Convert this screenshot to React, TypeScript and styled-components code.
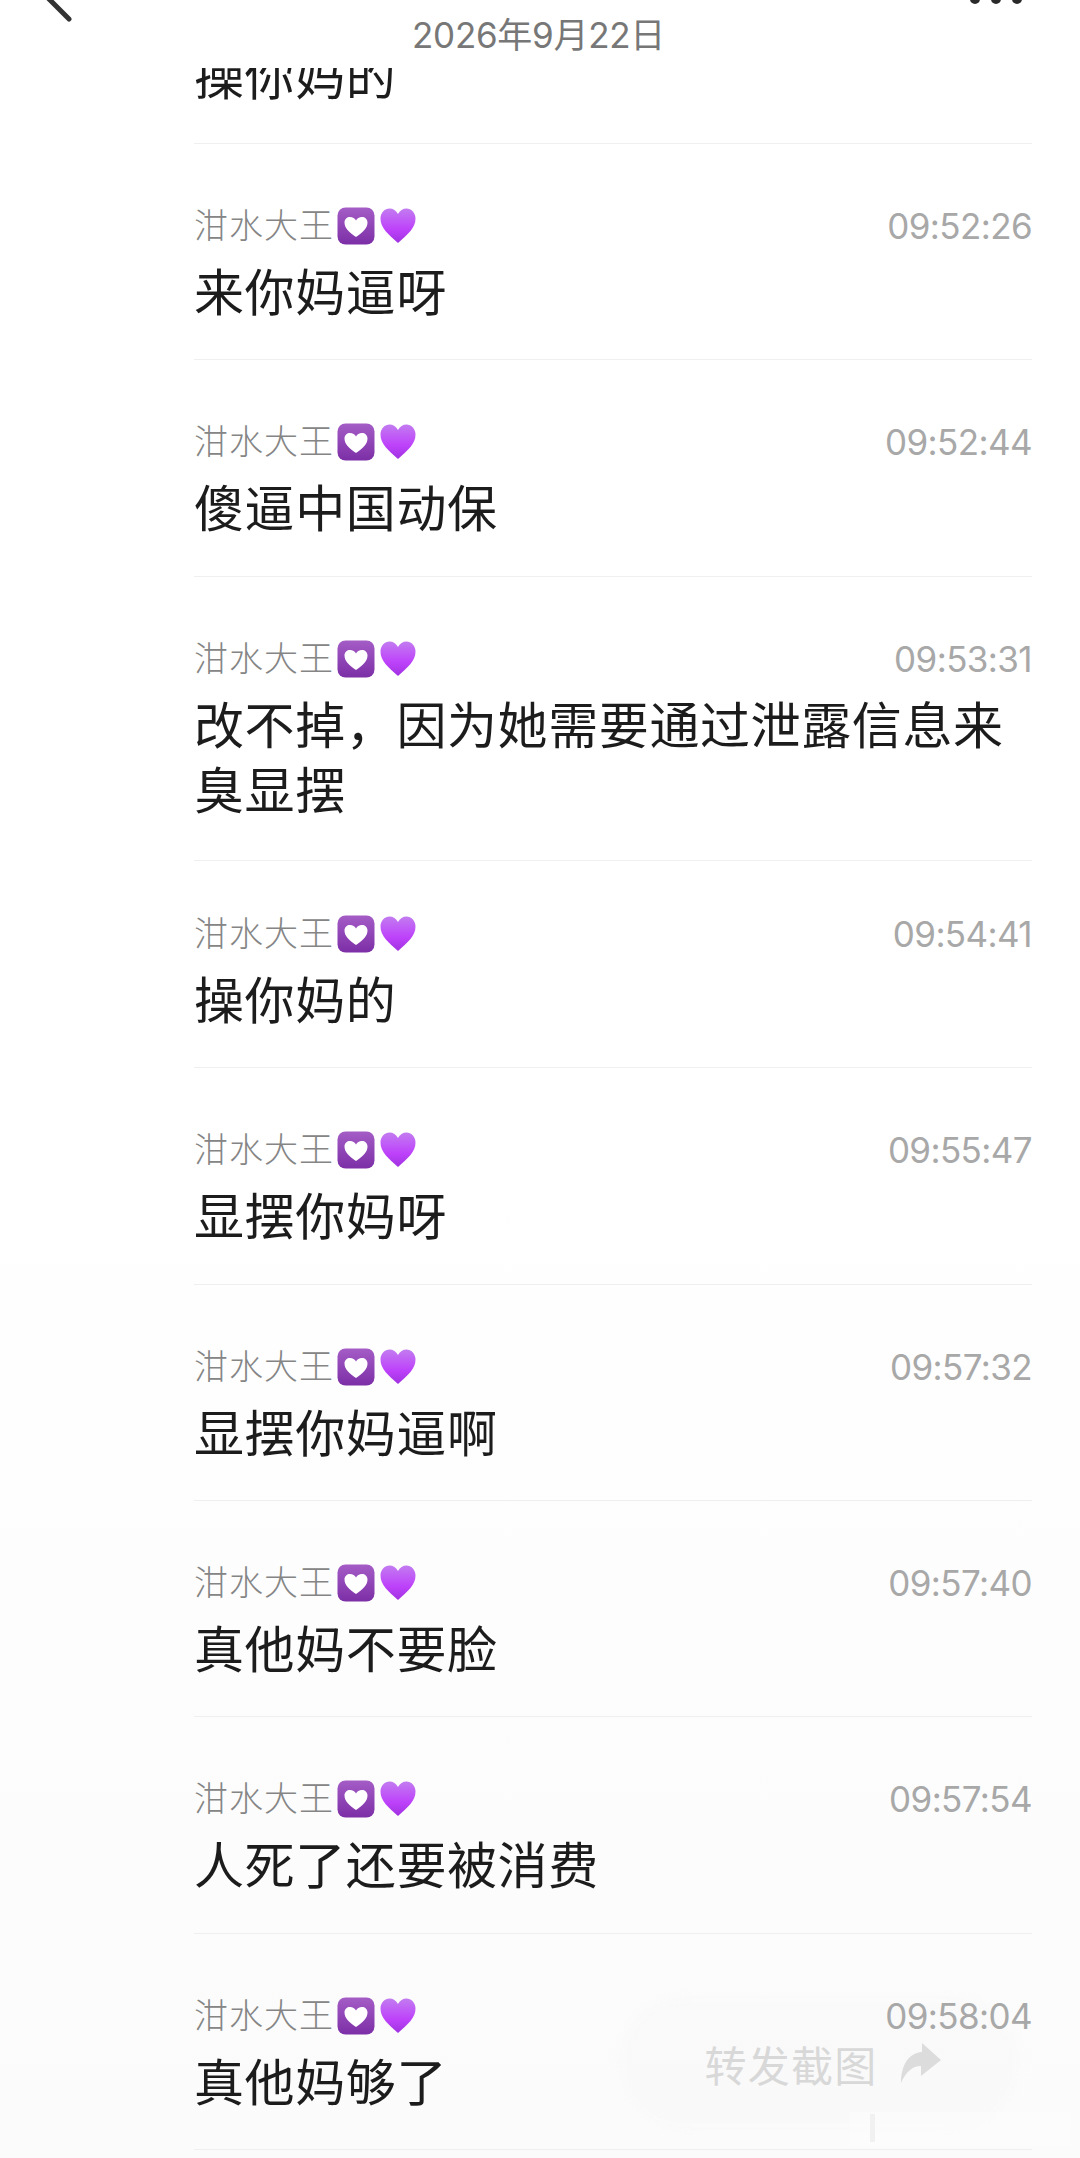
import React from 'react';
import styled, { createGlobalStyle } from 'styled-components';

type Message = {
  id: number;
  time: string;
  text: string;
  compact?: boolean;
  wrapped?: boolean;
};

const messages: Message[] = [
  { id: 1, time: '09:52:26', text: '来你妈逼呀' },
  { id: 2, time: '09:52:44', text: '傻逼中国动保' },
  { id: 3, time: '09:53:31', text: '改不掉，因为她需要通过泄露信息来臭显摆', wrapped: true },
  { id: 4, time: '09:54:41', text: '操你妈的', compact: true },
  { id: 5, time: '09:55:47', text: '显摆你妈呀' },
  { id: 6, time: '09:57:32', text: '显摆你妈逼啊' },
  { id: 7, time: '09:57:40', text: '真他妈不要脸' },
  { id: 8, time: '09:57:54', text: '人死了还要被消费' },
  { id: 9, time: '09:58:04', text: '真他妈够了' },
];

const GlobalStyle = createGlobalStyle`
  html, body {
    margin: 0;
    padding: 0;
    background: #fff;
  }
  * {
    box-sizing: border-box;
  }
`;

const Page = styled.div`
  position: relative;
  width: 1080px;
  height: 2158px;
  overflow: hidden;
  background: linear-gradient(#ffffff 0, #ffffff 1100px, #fbfbfb 2158px);
  font-family: "Liberation Sans", "Noto Sans CJK SC", sans-serif;
`;

const Header = styled.header`
  height: 68px;
  display: flex;
  align-items: center;
  justify-content: center;
  padding: 0 3px 3px 0;
  background: #fff;
`;

const DateLabel = styled.div`
  font-family: Inter, "Noto Sans CJK SC", sans-serif;
  font-size: 35px;
  letter-spacing: -0.3px;
  color: #777;
`;

const BackIcon = styled.svg`
  position: absolute;
  left: 40px;
  top: 0;
`;

const MoreDots = styled.div`
  position: absolute;
  right: 58px;
  top: -6px;
  display: flex;
  gap: 11px;
`;

const Dot = styled.span`
  width: 10px;
  height: 10px;
  border-radius: 50%;
  background: #2a2a2a;
`;

const List = styled.main`
  position: relative;
  z-index: 1;
  margin-left: 194px;
  width: 838px;
`;

const ClippedRow = styled.div`
  height: 76px;
  overflow: hidden;
  border-bottom: 1px solid #efefef;
`;

const ClippedText = styled.div`
  margin-top: -22px;
  font-size: 50px;
  line-height: 65px;
  letter-spacing: 0.6px;
  color: #1c1c1c;
`;

const Row = styled.article<{ $compact?: boolean; $wrapped?: boolean }>`
  padding-top: ${p => (p.$compact ? '48px' : '57px')};
  padding-bottom: ${p => (p.$wrapped ? '35px' : '32.4px')};
  border-bottom: 1px solid #efefef;
`;

const RowHead = styled.div`
  height: 50px;
  display: flex;
  align-items: center;
  justify-content: space-between;
`;

const Sender = styled.div`
  display: flex;
  align-items: center;
`;

const SenderName = styled.span`
  margin-right: 3px;
  font-size: 34px;
  line-height: 40px;
  letter-spacing: 1px;
  color: #858585;
  font-weight: 300;
`;

const Emoji = styled.svg<{ $gap?: number }>`
  flex: none;
  margin-left: ${p => p.$gap ?? 0}px;
`;

const Time = styled.time`
  font-family: Inter, "Liberation Sans", sans-serif;
  font-size: 35px;
  letter-spacing: -0.6px;
  color: #a8a8a8;
`;

const Body = styled.p`
  margin: 11px 0 0;
  font-size: 50px;
  line-height: 65px;
  letter-spacing: 0.6px;
  color: #1c1c1c;
`;

const ForwardPill = styled.div`
  position: absolute;
  left: 625px;
  top: 2003px;
  width: 388px;
  height: 120px;
  display: flex;
  align-items: center;
  justify-content: center;
  gap: 22px;
  padding-left: 10px;
  border-radius: 60px;
  background: rgba(247, 247, 247, 0.35);
  box-shadow: 0 0 16px rgba(247, 247, 247, 0.6);
  font-size: 42px;
  letter-spacing: 1.2px;
  color: #d8d8d8;
`;

const Watermark = styled.div`
  position: absolute;
  left: 850px;
  top: 2112px;
  width: 220px;
  height: 34px;
  background: rgba(255, 255, 255, 0.3);
`;

const WatermarkMark = styled.span`
  position: absolute;
  left: 20px;
  top: 2px;
  width: 5px;
  height: 28px;
  background: #f1f1f1;
`;

const HeartSquare = () => (
  <Emoji width="38" height="38" viewBox="0 0 38 38">
    <defs>
      <linearGradient id="squareFill" x1="0" y1="0" x2="0" y2="1">
        <stop offset="0" stopColor="#a45cc6" />
        <stop offset="1" stopColor="#7c2fa6" />
      </linearGradient>
    </defs>
    <rect x="0.5" y="0.5" width="37" height="37" rx="8" fill="url(#squareFill)" />
    <path d="M19 30C12 25 7.500 21 7.500 15.500c0-3.500 2.700-5.500 5.500-5.500 2.700 0 4.900 1.300 6 3.600 1.100-2.300 3.300-3.600 6-3.600 2.800 0 5.500 2 5.500 5.500C30.500 21 26 25 19 30z" fill="#fff" />
  </Emoji>
);

const PurpleHeart = () => (
  <Emoji $gap={5} width="36" height="36" viewBox="0 0 36 36">
    <defs>
      <linearGradient id="heartFill" x1="0" y1="0" x2="0" y2="1">
        <stop offset="0" stopColor="#c27cf0" />
        <stop offset="0.6" stopColor="#be42fb" />
        <stop offset="1" stopColor="#a032e0" />
      </linearGradient>
    </defs>
    <path d="M18 35C8 26 .5 20 .5 10.500.5 4.500 5 .5 9.500.5 13 .5 16.300 2.500 18 6c1.700-3.500 5-5.500 8.500-5.500 4.500 0 9 4 9 10 0 9.500-7.500 15.500-17.500 24.500z" fill="url(#heartFill)" />
  </Emoji>
);

const MessageRow = ({ message }: { message: Message }) => (
  <Row $compact={message.compact} $wrapped={message.wrapped}>
    <RowHead>
      <Sender>
        <SenderName>泔水大王</SenderName>
        <HeartSquare />
        <PurpleHeart />
      </Sender>
      <Time>{message.time}</Time>
    </RowHead>
    <Body>{message.text}</Body>
  </Row>
);

export default function App() {
  return (
    <Page>
      <GlobalStyle />
      <Header>
        <DateLabel>2026年9月22日</DateLabel>
      </Header>
      <BackIcon width="40" height="26" viewBox="0 0 40 26">
        <path d="M9-1l20 20" stroke="#333" strokeWidth="5" strokeLinecap="round" fill="none" />
      </BackIcon>
      <MoreDots>
        <Dot />
        <Dot />
        <Dot />
      </MoreDots>
      <List>
        <ClippedRow>
          <ClippedText>操你妈的</ClippedText>
        </ClippedRow>
        {messages.map(message => (
          <MessageRow key={message.id} message={message} />
        ))}
      </List>
      <ForwardPill>
        转发截图
        <svg width="44" height="42" viewBox="0 0 44 42">
          <path d="M23 1l19 17-20 16V24C13 24 7 30 2 41 2 24 9 11 23 10z" fill="#dcdcdc" />
        </svg>
      </ForwardPill>
      <Watermark>
        <WatermarkMark />
      </Watermark>
    </Page>
  );
}
